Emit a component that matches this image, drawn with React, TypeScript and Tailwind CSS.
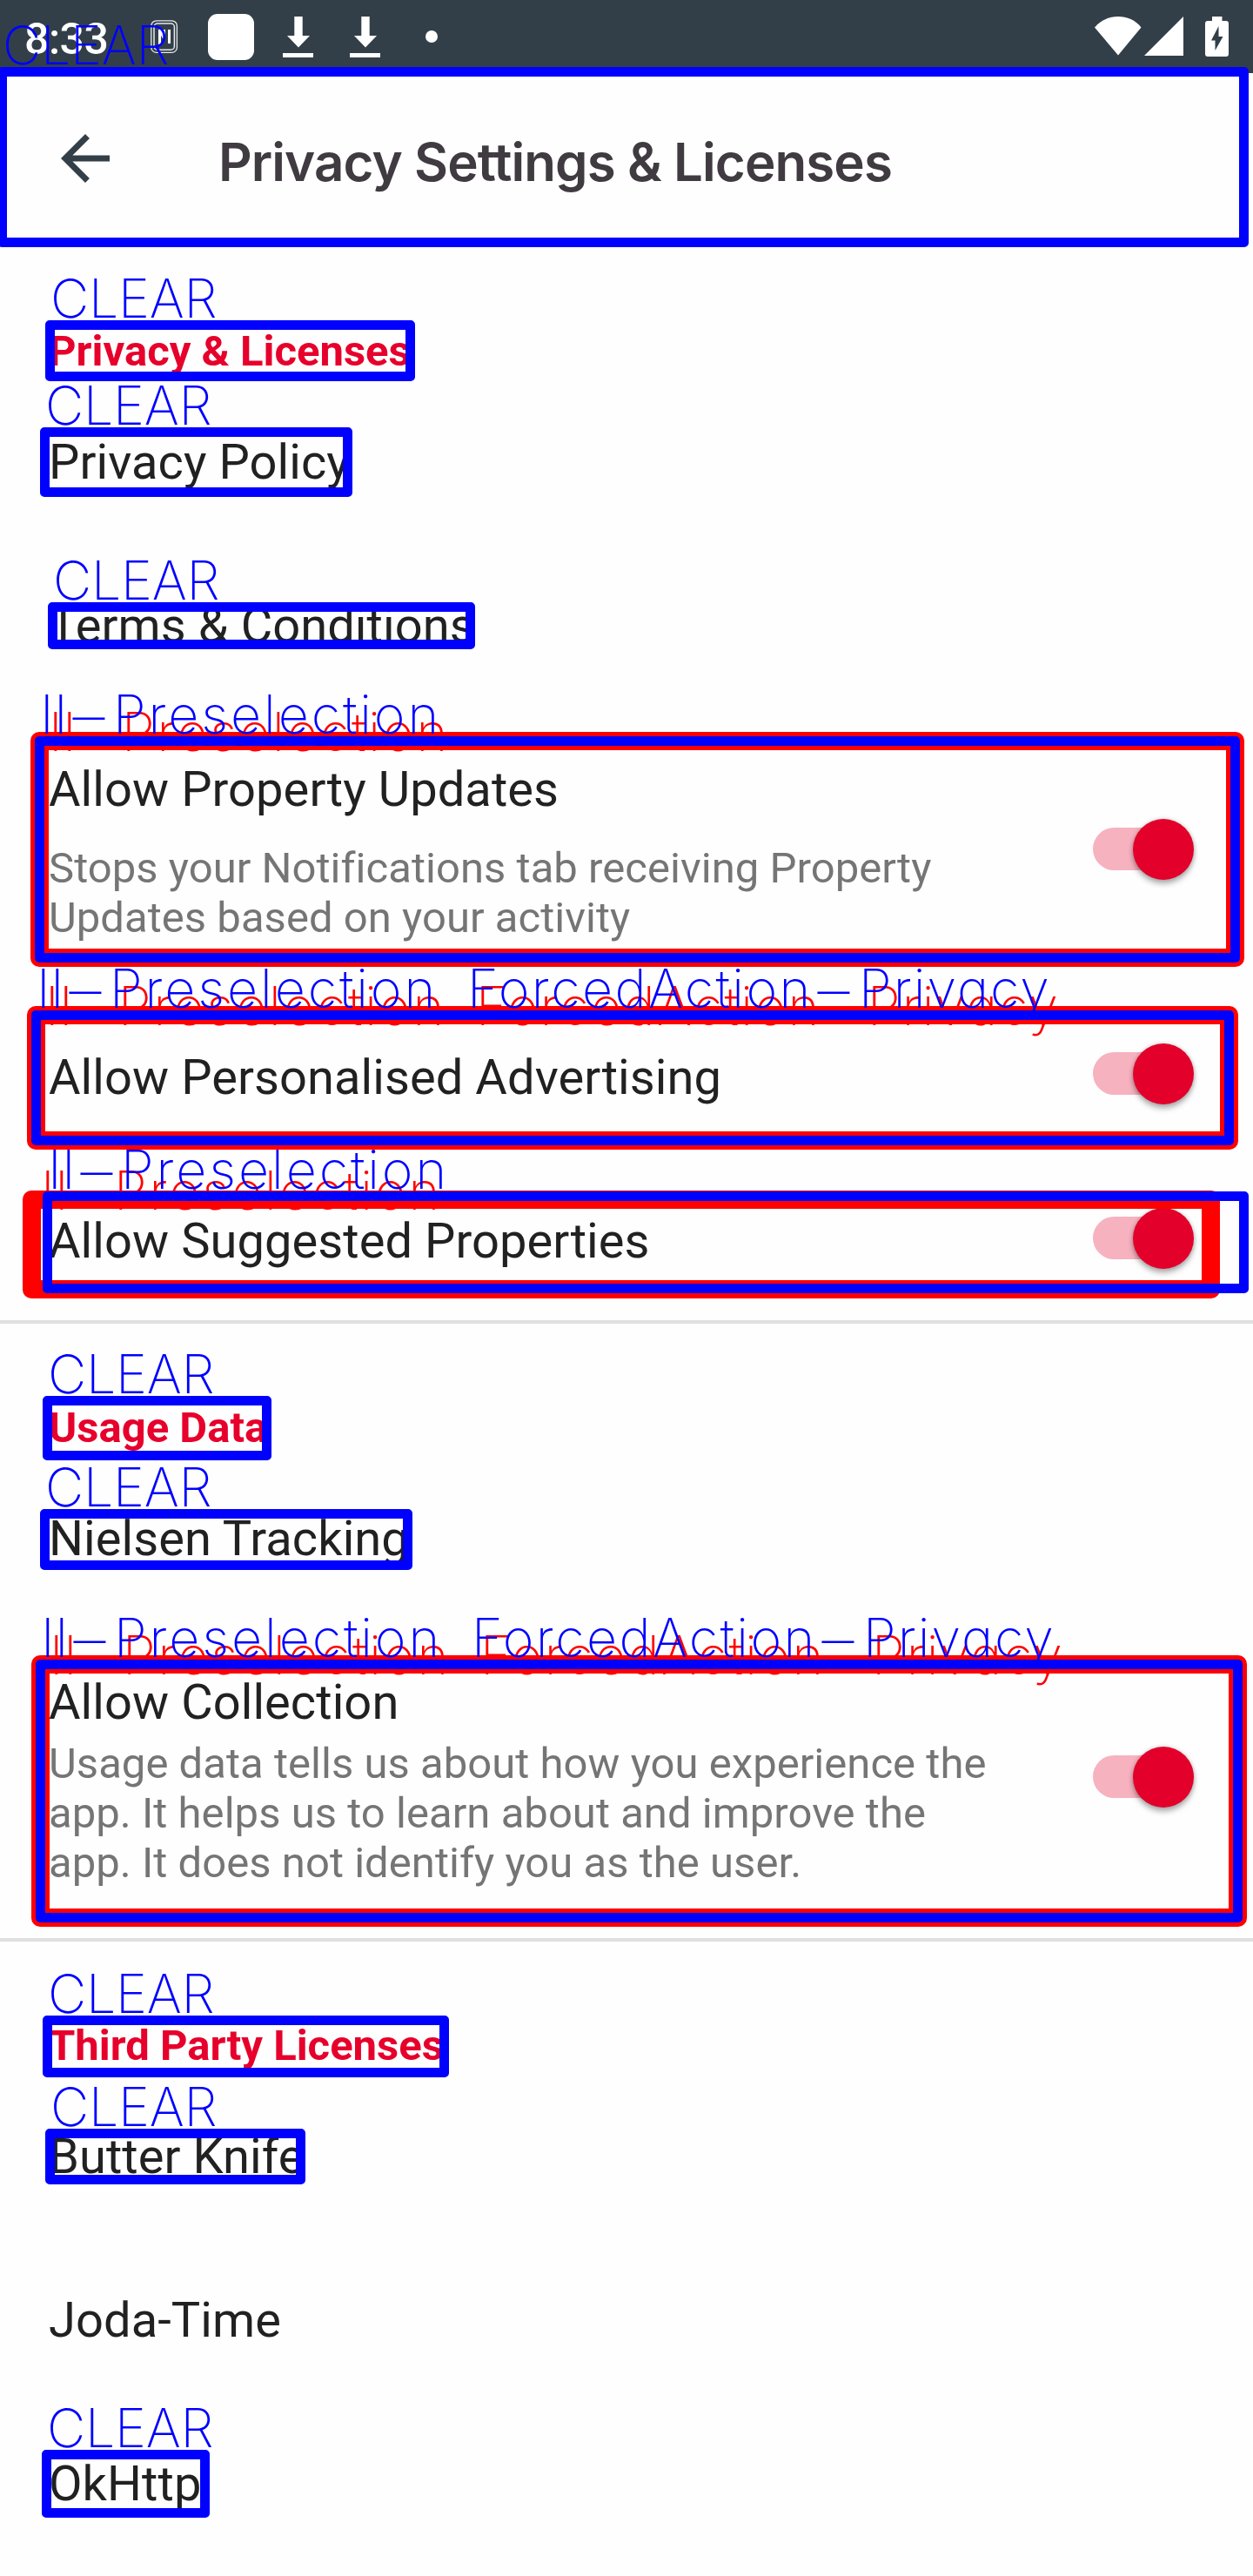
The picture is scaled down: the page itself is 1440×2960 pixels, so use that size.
import type { ReactNode } from "react";

/* ---------- status bar ---------- */

function DownloadIcon({ className }: { className: string }) {
  return (
    <svg viewBox="0 0 36 48" className={`h-12 w-9 ${className}`} fill="#fff">
      <path d="M13.3 0h9.4v22h8.3L18 35.5 5 22h8.3z" />
      <path d="M0 42h35v5H0z" />
    </svg>
  );
}

function StatusBar() {
  return (
    <div className="flex h-[84px] items-start bg-[#333f48]">
      <div className="mt-[15px] ml-7 w-[145px] text-[50px] leading-[60px] font-medium tracking-[-0.5px] text-white">
        8:33
      </div>
      <svg viewBox="0 0 32 39" className="mt-[23px] h-[39px] w-8" fill="none" stroke="#e8eaec">
        <rect x="0.8" y="0.8" width="29.6" height="36.6" rx="6" strokeWidth="1.3" />
        <rect x="4" y="4" width="23.4" height="30.2" rx="4" strokeWidth="1.5" />
        <path d="M10.5 28V11l5 10V11M21.5 11v16" stroke="#fff" strokeWidth="3" />
      </svg>
      <div className="mt-4 ml-[34px] h-[53px] w-[53px] rounded-[11px] bg-white" />
      <DownloadIcon className="mt-[19px] ml-[33px]" />
      <DownloadIcon className="mt-[19px] ml-[41px]" />
      <div className="mt-[35px] ml-[51px] size-3.5 rounded-full bg-white" />
      <svg viewBox="0 0 54 45" className="mt-[19px] ml-auto h-[45px] w-[54px]" fill="#fff">
        <path d="M0 12.5C7 4 17 0 27 0s20 4 26.500 12.500L27 44.500z" />
      </svg>
      <svg viewBox="0 0 45 45" className="mt-[19px] ml-[3px] h-[45px] w-[45px]" fill="#fff">
        <path d="M45 0v45H0z" />
      </svg>
      <svg viewBox="0 0 27 46" className="mt-[19px] mr-7 ml-[25px] h-[46px] w-[27px]">
        <path
          fill="#fff"
          d="M8 0h11.500v5H24a3 3 0 0 1 3 3v35a3 3 0 0 1-3 3H3a3 3 0 0 1-3-3V8a3 3 0 0 1 3-3h5z"
        />
        <path fill="#333f48" d="M15.500 11v12h5L11.500 39V27.500H7z" />
      </svg>
    </div>
  );
}

/* ---------- settings content ---------- */

function Header() {
  return (
    <header className="flex h-[200px] items-start">
      <svg viewBox="0 0 24 24" className="mt-14 ml-14 size-[84px]" fill="#333f48">
        <path d="M20 11H7.830l5.590-5.590L12 4l-8 8 8 8 1.410-1.410L7.830 13H20z" />
      </svg>
      <h1 className="mt-[66px] ml-[111px] font-[Inter] text-[60px] leading-[72px] font-semibold tracking-[-0.9px] whitespace-nowrap text-[#3f3b40] [font-variant-ligatures:none]">
        Privacy Settings &amp; Licenses
      </h1>
    </header>
  );
}

function SectionTitle({ children }: { children: ReactNode }) {
  return (
    <h2 className="h-[153px] pt-[91px] pl-14 text-[49px] leading-[57px] font-bold text-[#e6002b]">
      {children}
    </h2>
  );
}

function Toggle({ className }: { className: string }) {
  return (
    <div className={`mr-[68px] flex h-[70px] w-[116px] items-center ${className}`}>
      <div className="mb-0.5 h-[49px] w-[82px] rounded-l-full bg-[#f7b2bf]" />
      <div className="-ml-9 size-[70px] shrink-0 rounded-full bg-[#e3002a] shadow-[0_5px_6px_rgba(0,0,0,0.28),0_0_5px_rgba(0,0,0,0.2)]" />
    </div>
  );
}

interface RowProps {
  title: string;
  lines?: string[];
  height?: string;
  gap?: string;
  toggle?: string;
}

function Row({ title, lines, height = "h-[188px]", gap = "", toggle }: RowProps) {
  return (
    <div className={`flex items-start justify-between pl-14 ${height}`}>
      <div className="pt-[61px] whitespace-nowrap">
        <div className="text-[56px] leading-[66px] tracking-[0.08px] text-[#212121]">{title}</div>
        {lines && (
          <p className={`text-[49px] leading-[57px] tracking-[0.04px] text-[#757575] ${gap}`}>
            {lines.map((line) => (
              <span key={line} className="block">
                {line}
              </span>
            ))}
          </p>
        )}
      </div>
      {toggle && <Toggle className={toggle} />}
    </div>
  );
}

/* ---------- annotation overlay ---------- */

const labelBase =
  "absolute font-[Inter] text-[61px] leading-[60px] font-[250] whitespace-nowrap [font-feature-settings:'cv11','calt'_0]";

function Clear({ at }: { at: string }) {
  return <div className={`${labelBase} pl-px tracking-[-0.3px] text-[#0000ff] ${at}`}>CLEAR</div>;
}

function Dash({ width }: { width: string }) {
  return (
    <span className={`inline-block ${width}`}>
      <span className="-ml-1 inline-block origin-left scale-x-[1.42]">−</span>
    </span>
  );
}

function Pattern({ at, color, forced }: { at: string; color: string; forced?: boolean }) {
  return (
    <div className={`${labelBase} flex pt-px ${color} ${at}`}>
      <span className="inline-block w-8 tracking-[0.5px]">II</span>
      <Dash width="w-[52px]" />
      <span className="inline-block w-[411px] tracking-[2.9px]">Preselection</span>
      {forced && (
        <>
          <span className="inline-block w-[397px] tracking-[2.4px]">ForcedAction</span>
          <Dash width="w-[53px]" />
          <span className="tracking-[2px]">Privacy</span>
        </>
      )}
    </div>
  );
}

function BlueBox({ at }: { at: string }) {
  return <div className={`absolute rounded-[5px] border-[11px] border-[#0000ff] ${at}`} />;
}

function RedBox({ at }: { at: string }) {
  return <div className={`absolute rounded-[10px] border-[21px] border-[#ff0000] ${at}`} />;
}

const BLUE = "text-[#0000ff]";
const RED = "text-[#ff0000]";

function Annotations() {
  return (
    <div className="pointer-events-none absolute inset-0 overflow-hidden">
      <Clear at="left-[2px] top-[22px]" />
      <BlueBox at="left-[-3px] top-[77px] h-[207px] w-[1438px]" />

      <Clear at="left-[57px] top-[313px]" />
      <BlueBox at="left-[52px] top-[368px] h-[70px] w-[425px]" />
      <Clear at="left-[51px] top-[436px]" />
      <BlueBox at="left-[46px] top-[491px] h-[80px] w-[359px]" />
      <Clear at="left-[60px] top-[637px]" />
      <BlueBox at="left-[55px] top-[692px] h-[54px] w-[491px]" />

      <Pattern at="left-[56px] top-[810px]" color={RED} />
      <RedBox at="left-[35px] top-[841px] h-[270px] w-[1395px]" />
      <Pattern at="left-[46px] top-[790px]" color={BLUE} />
      <BlueBox at="left-[40px] top-[846px] h-[260px] w-[1385px]" />

      <Pattern at="left-[52px] top-[1125px]" color={RED} forced />
      <RedBox at="left-[31px] top-[1156px] h-[165px] w-[1392px]" />
      <Pattern at="left-[42px] top-[1105px]" color={BLUE} forced />
      <BlueBox at="left-[36px] top-[1161px] h-[155px] w-[1382px]" />

      <Pattern at="left-[47px] top-[1337px]" color={RED} />
      <RedBox at="left-[26px] top-[1368px] h-[124px] w-[1376px]" />
      <Pattern at="left-[55px] top-[1313px]" color={BLUE} />
      <BlueBox at="left-[49px] top-[1369px] h-[117px] w-[1386px]" />

      <Clear at="left-[54px] top-[1549px]" />
      <BlueBox at="left-[49px] top-[1604px] h-[74px] w-[263px]" />
      <Clear at="left-[51px] top-[1679px]" />
      <BlueBox at="left-[46px] top-[1734px] h-[70px] w-[428px]" />

      <Pattern at="left-[57px] top-[1871px]" color={RED} forced />
      <RedBox at="left-[36px] top-[1902px] h-[312px] w-[1397px]" />
      <Pattern at="left-[47px] top-[1851px]" color={BLUE} forced />
      <BlueBox at="left-[41px] top-[1907px] h-[302px] w-[1387px]" />

      <Clear at="left-[54px] top-[2261px]" />
      <BlueBox at="left-[49px] top-[2316px] h-[71px] w-[467px]" />
      <Clear at="left-[57px] top-[2391px]" />
      <BlueBox at="left-[52px] top-[2446px] h-[64px] w-[299px]" />
      <Clear at="left-[53px] top-[2760px]" />
      <BlueBox at="left-[48px] top-[2815px] h-[78px] w-[193px]" />
    </div>
  );
}

export default function App() {
  return (
    <div className="relative h-[2960px] w-[1440px] overflow-hidden bg-[#fefefe] font-[Roboto,sans-serif]">
      <StatusBar />
      <Header />
      <section className="border-b-4 border-[#e0e0e0]">
        <SectionTitle>Privacy &amp; Licenses</SectionTitle>
        <Row title="Privacy Policy" />
        <Row title="Terms & Conditions" />
        <Row
          title="Allow Property Updates"
          lines={["Stops your Notifications tab receiving Property", "Updates based on your activity"]}
          height="h-[331px]"
          gap="mt-[29px]"
          toggle="mt-[128px]"
        />
        <Row title="Allow Personalised Advertising" toggle="mt-[55px]" />
        <Row title="Allow Suggested Properties" height="h-[185px]" toggle="mt-[56px]" />
      </section>
      <section className="border-b-4 border-[#e0e0e0]">
        <SectionTitle>Usage Data</SectionTitle>
        <Row title="Nielsen Tracking" />
        <Row
          title="Allow Collection"
          lines={[
            "Usage data tells us about how you experience the",
            "app. It helps us to learn about and improve the",
            "app. It does not identify you as the user.",
          ]}
          height="h-[365px]"
          gap="mt-[9px]"
          toggle="mt-[145px]"
        />
      </section>
      <section>
        <SectionTitle>Third Party Licenses</SectionTitle>
        <Row title="Butter Knife" />
        <Row title="Joda-Time" />
        <Row title="OkHttp" />
      </section>
      <Annotations />
    </div>
  );
}
